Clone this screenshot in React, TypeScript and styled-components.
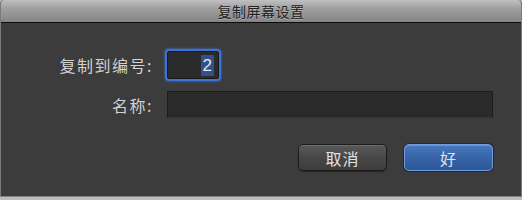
import styled, { createGlobalStyle } from "styled-components";

const GlobalStyle = createGlobalStyle`
  html, body {
    margin: 0;
    padding: 0;
    background: #bdbdbd;
  }
  * {
    box-sizing: border-box;
  }
`;

const cjk = `"Noto Sans CJK SC", "Noto Sans", sans-serif`;

export default function App() {
  return (
    <>
      <GlobalStyle />
      <Window>
        <TitleBar>复制屏幕设置</TitleBar>
        <Body>
          <Form>
            <Label>复制到编号:</Label>
            <NumberField>
              <Selected>2</Selected>
            </NumberField>
            <Label>名称:</Label>
            <TextField />
          </Form>
          <Buttons>
            <Button>取消</Button>
            <Button primary>好</Button>
          </Buttons>
        </Body>
      </Window>
    </>
  );
}

const Window = styled.div`
  width: 522px;
  height: 197px;
  display: flex;
  flex-direction: column;
  background: #3c3c3c;
  border-left: 1px solid #7a7a7a;
  border-right: 1px solid #7a7a7a;
  border-bottom: 1px solid #808080;
  border-radius: 4px 4px 0 0;
  overflow: hidden;
  font-family: ${cjk};
`;

const TitleBar = styled.div`
  height: 23px;
  flex: none;
  display: flex;
  align-items: center;
  justify-content: center;
  background: linear-gradient(to bottom, #c0c0c0 0%, #9e9e9e 40%, #858585 100%);
  border-bottom: 1px solid #0c0c0c;
  color: #232323;
  font-size: 14px;
  padding-bottom: 1px;
  text-shadow: 0 1px 0 rgba(255, 255, 255, 0.3);
  letter-spacing: 0.5px;
`;

const Body = styled.div`
  flex: 1;
  display: flex;
  flex-direction: column;
  padding: 28px 28px 0 0;
`;

const Form = styled.div`
  display: grid;
  grid-template-columns: 152px 1fr;
  column-gap: 14px;
  row-gap: 12px;
  align-items: center;
`;

const Label = styled.div`
  text-align: right;
  color: #d2d2d2;
  font-size: 16px;
  letter-spacing: 1.5px;
`;

const NumberField = styled.div`
  width: 52px;
  height: 28px;
  display: flex;
  align-items: center;
  justify-content: flex-end;
  padding-right: 4px;
  background: #2a2a2a;
  border: 1px solid #1a1a1a;
  border-radius: 2px;
  box-shadow: 0 0 0 2px #3d72d8, 0 0 2px 3px rgba(70, 120, 220, 0.45);
`;

const Selected = styled.span`
  background: #30528a;
  color: #e6e6e6;
  font-family: "Liberation Sans", Arial, sans-serif;
  font-size: 17px;
  line-height: 21px;
  padding: 0 2px;
`;

const TextField = styled.div`
  height: 27px;
  background: #2a2a2a;
  border: 1px solid #1c1c1c;
  border-bottom-color: #333;
`;

const Buttons = styled.div`
  display: flex;
  justify-content: flex-end;
  gap: 17px;
  margin-top: 26px;
`;

const Button = styled.button<{ primary?: boolean }>`
  width: 89px;
  height: 27px;
  border-radius: 5px;
  font-family: ${cjk};
  font-size: 16px;
  letter-spacing: 1px;
  color: #e2e2e2;
  padding: 0;
  border: 1px solid ${(p) => (p.primary ? "#6f9be0" : "#1c1c1c")};
  background: ${(p) =>
    p.primary
      ? "linear-gradient(to bottom, #4a78bd 0%, #3764a8 50%, #2d5898 100%)"
      : "linear-gradient(to bottom, #595959 0%, #474747 50%, #3d3d3d 100%)"};
  box-shadow: ${(p) =>
    p.primary
      ? "0 0 0 1px #1a2a44, inset 0 1px 0 rgba(255,255,255,0.2)"
      : "inset 0 1px 0 rgba(255,255,255,0.12), 0 1px 1px rgba(0,0,0,0.4)"};
`;
